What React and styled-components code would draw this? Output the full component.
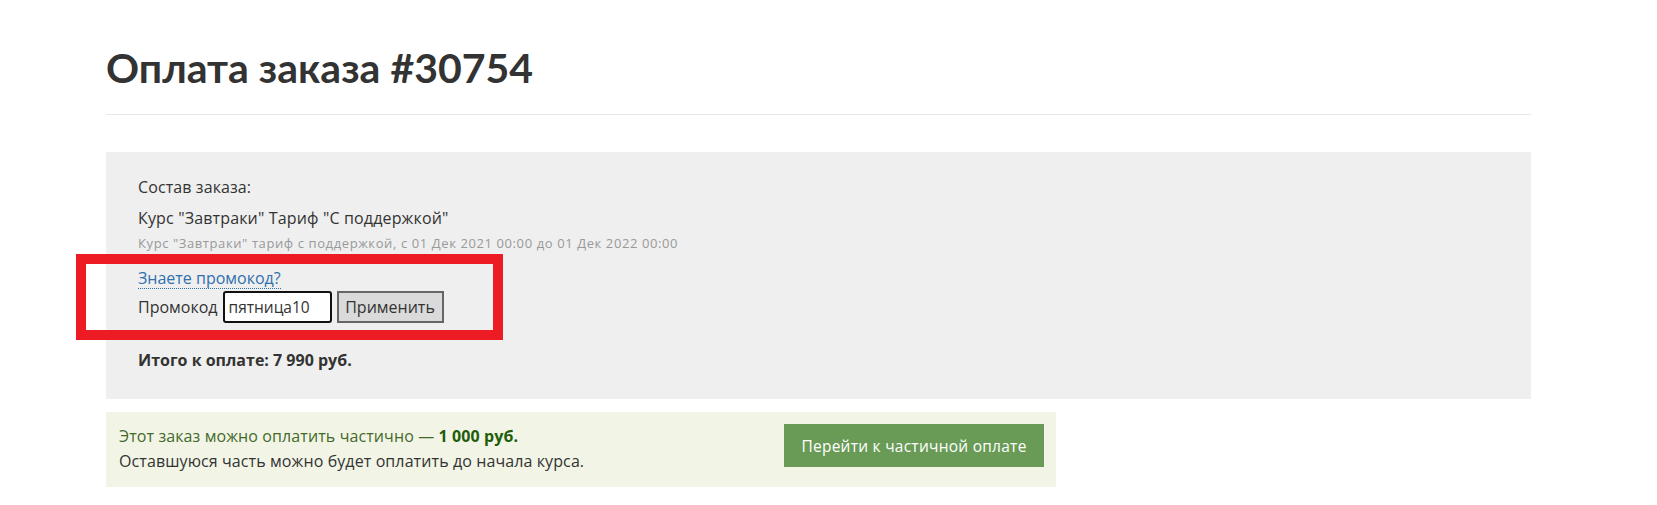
import React from 'react';
import styled, { createGlobalStyle } from 'styled-components';

const GlobalStyle = createGlobalStyle`
  body {
    margin: 0;
    background: #fff;
    font-family: "Open Sans", Lato, sans-serif;
    color: #333;
  }
`;

const Page = styled.div`
  position: relative;
  padding: 44px 0 0 106px;
  width: 1425px;
`;

const Title = styled.h1`
  margin: 0;
  font-family: Lato, "Open Sans", sans-serif;
  font-size: 41px;
  line-height: 48px;
  font-weight: 700;
  color: #333;
  padding-bottom: 22px;
  border-bottom: 1px solid #e8e8e8;
`;

const OrderPanel = styled.div`
  margin-top: 37px;
  background: #efefef;
  height: 247px;
  box-sizing: border-box;
  padding: 25px 32px 0;
`;

const Label = styled.div`
  font-size: 16px;
  letter-spacing: 0.1px;
  line-height: 20px;
  margin-bottom: 11px;
`;

const ItemName = styled.div`
  font-size: 16px;
  letter-spacing: 0.15px;
  line-height: 20px;
`;

const ItemNote = styled.div`
  font-size: 13px;
  letter-spacing: 0.6px;
  line-height: 18px;
  color: #999;
  margin-top: 6px;
`;

const PromoLink = styled.a`
  display: inline-block;
  margin-top: 17px;
  font-size: 16px;
  line-height: 19px;
  color: #2f70ae;
  text-decoration: none;
  border-bottom: 1px dotted #2f70ae;
`;

const PromoRow = styled.div`
  display: flex;
  align-items: center;
  gap: 5px;
  margin-top: 2px;
  font-size: 16px;
`;

const PromoInput = styled.input`
  width: 109px;
  height: 32px;
  box-sizing: border-box;
  border: 2px solid #111;
  border-radius: 3px;
  padding: 0 4px;
  font-family: inherit;
  font-size: 15.5px;
  color: #333;
  background: #fff;
  outline: none;
`;

const ApplyButton = styled.button`
  width: 107px;
  height: 32px;
  box-sizing: border-box;
  border: 2px solid #666;
  background: #dadada;
  font-family: inherit;
  font-size: 16px;
  color: #333;
  padding: 0;
`;

const Total = styled.div`
  margin-top: 26px;
  font-size: 16px;
  font-weight: 700;
`;

const PartialBox = styled.div`
  margin-top: 13px;
  width: 950px;
  height: 75px;
  box-sizing: border-box;
  background: #f2f5e6;
  display: flex;
  justify-content: space-between;
  align-items: flex-start;
  padding: 12px 12px 0 13px;
`;

const PartialText = styled.div`
  font-size: 16px;
  letter-spacing: 0.1px;
  line-height: 25px;
`;

const GreenLine = styled.div`
  color: #43692b;
  b {
    font-weight: 700;
    color: #1f5c0c;
  }
`;

const PayButton = styled.button`
  width: 260px;
  height: 43px;
  border: none;
  background: #699b56;
  color: #fff;
  font-family: inherit;
  font-size: 15.5px;
  letter-spacing: 0.25px;
  padding: 0;
`;

const Highlight = styled.div`
  position: absolute;
  left: 76px;
  top: 254px;
  width: 427px;
  height: 86px;
  box-sizing: border-box;
  border: 10px solid #ed1c24;
  pointer-events: none;
`;

export default function App() {
  return (
    <>
      <GlobalStyle />
      <Page>
        <Title>Оплата заказа #30754</Title>
        <OrderPanel>
          <Label>Состав заказа:</Label>
          <ItemName>Курс "Завтраки" Тариф "С поддержкой"</ItemName>
          <ItemNote>
            Курс "Завтраки" тариф с поддержкой, с 01 Дек 2021 00:00 до 01 Дек 2022 00:00
          </ItemNote>
          <PromoLink href="#">Знаете промокод?</PromoLink>
          <PromoRow>
            Промокод
            <PromoInput defaultValue="пятница10" />
            <ApplyButton>Применить</ApplyButton>
          </PromoRow>
          <Total>Итого к оплате: 7 990 руб.</Total>
        </OrderPanel>
        <PartialBox>
          <PartialText>
            <GreenLine>
              Этот заказ можно оплатить частично — <b>1 000 руб.</b>
            </GreenLine>
            <div>Оставшуюся часть можно будет оплатить до начала курса.</div>
          </PartialText>
          <PayButton>Перейти к частичной оплате</PayButton>
        </PartialBox>
        <Highlight />
      </Page>
    </>
  );
}
